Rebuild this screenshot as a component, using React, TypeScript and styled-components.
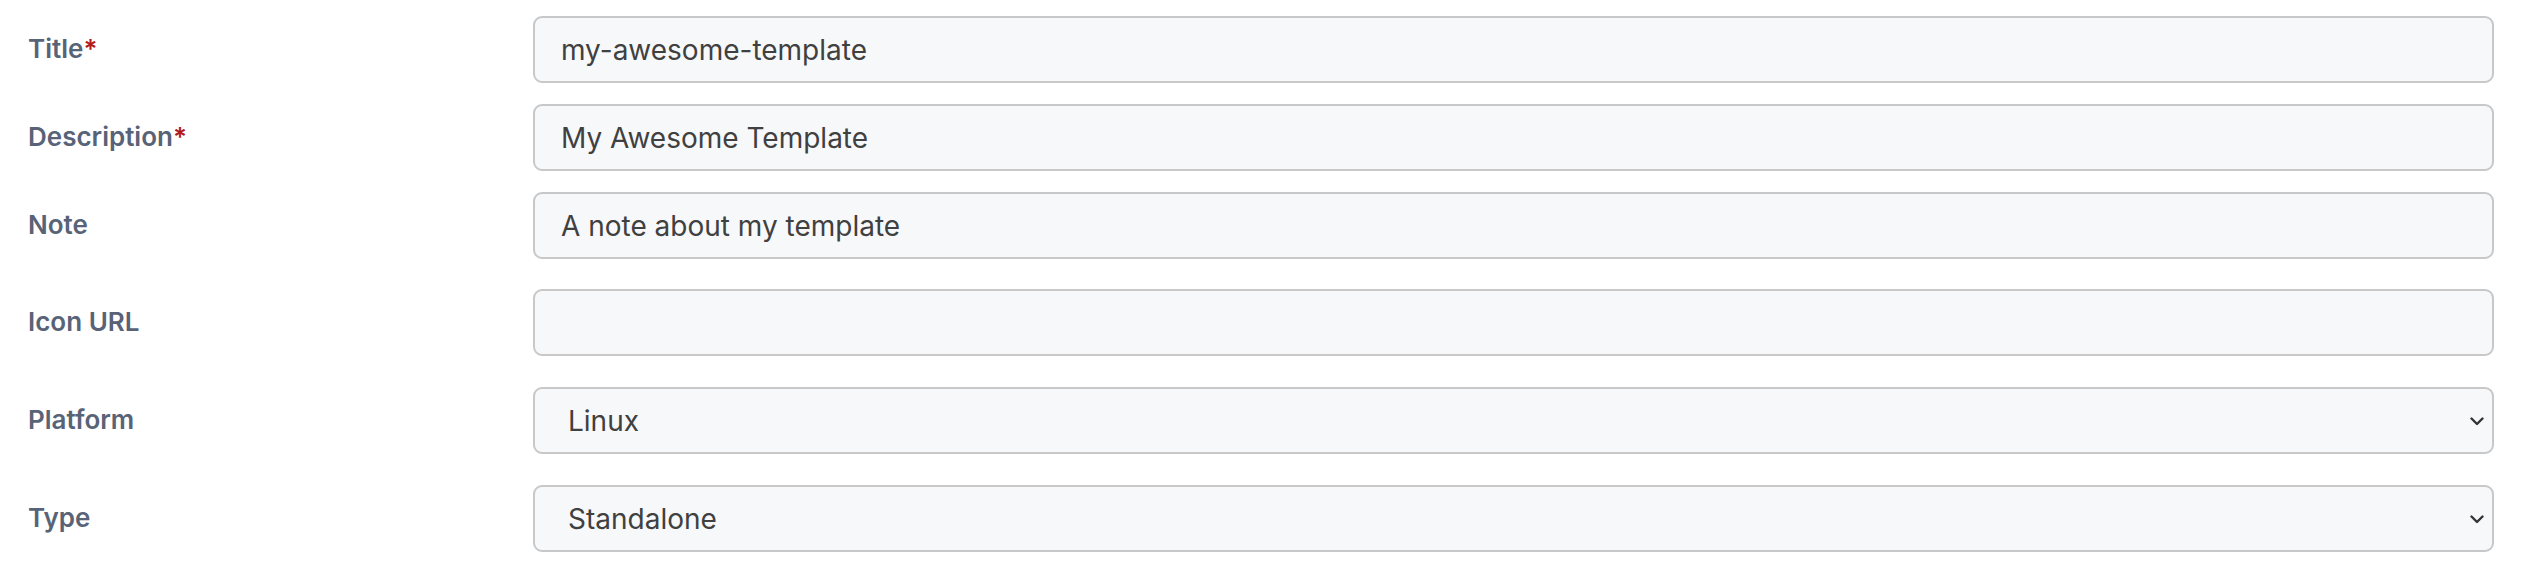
import React from "react";
import styled, { createGlobalStyle } from "styled-components";

const GlobalStyle = createGlobalStyle`
  html, body {
    margin: 0;
    padding: 0;
    background: #fff;
  }
  body {
    font-family: Inter, "Noto Sans", sans-serif;
  }
`;

const Form = styled.form`
  width: 2544px;
  box-sizing: border-box;
  padding: 16px 50px 0 28px;
`;

const Row = styled.div<{ $gap: number }>`
  display: grid;
  grid-template-columns: 505px 1fr;
  align-items: center;
  margin-bottom: ${(p) => p.$gap}px;
`;

const Label = styled.label`
  font-size: 26px;
  font-weight: 600;
  color: #586377;
  line-height: 1;
  padding-bottom: 2px;
`;

const Required = styled.span`
  color: #b31b1b;
`;

const TextInput = styled.input`
  box-sizing: border-box;
  width: 100%;
  height: 67px;
  padding: 0 26px;
  border: 2px solid #c8c8c8;
  border-radius: 9px;
  background: #f7f8fa;
  font-family: Inter, "Noto Sans", sans-serif;
  font-size: 28px;
  color: #404040;
  outline: none;
`;

const SelectWrap = styled.div`
  position: relative;
`;

const Select = styled.select`
  box-sizing: border-box;
  width: 100%;
  height: 67px;
  padding: 0 60px 0 33px;
  border: 2px solid #c8c8c8;
  border-radius: 9px;
  background: #f7f8fa;
  font-family: Inter, "Noto Sans", sans-serif;
  font-size: 28px;
  color: #404040;
  appearance: none;
  -webkit-appearance: none;
  outline: none;
`;

const Chevron = styled.svg`
  position: absolute;
  right: 10px;
  top: 50%;
  width: 14px;
  height: 10px;
  margin-top: -5px;
  pointer-events: none;
`;

const ChevronDown = () => (
  <Chevron viewBox="0 0 14 10">
    <path
      d="M1.5 2.5 L7 8 L12.5 2.5"
      fill="none"
      stroke="#333"
      strokeWidth="2.4"
      strokeLinecap="round"
      strokeLinejoin="round"
    />
  </Chevron>
);

const App = () => {
  return (
    <>
      <GlobalStyle />
      <Form>
        <Row $gap={21}>
          <Label htmlFor="title">
            Title<Required>*</Required>
          </Label>
          <TextInput id="title" defaultValue="my-awesome-template" />
        </Row>
        <Row $gap={21}>
          <Label htmlFor="description">
            Description<Required>*</Required>
          </Label>
          <TextInput id="description" defaultValue="My Awesome Template" />
        </Row>
        <Row $gap={30}>
          <Label htmlFor="note">Note</Label>
          <TextInput id="note" defaultValue="A note about my template" />
        </Row>
        <Row $gap={31}>
          <Label htmlFor="icon">Icon URL</Label>
          <TextInput id="icon" defaultValue="" />
        </Row>
        <Row $gap={31}>
          <Label htmlFor="platform">Platform</Label>
          <SelectWrap>
            <Select id="platform" defaultValue="linux">
              <option value="linux">Linux</option>
              <option value="windows">Windows</option>
            </Select>
            <ChevronDown />
          </SelectWrap>
        </Row>
        <Row $gap={0}>
          <Label htmlFor="type">Type</Label>
          <SelectWrap>
            <Select id="type" defaultValue="standalone">
              <option value="standalone">Standalone</option>
              <option value="swarm">Swarm</option>
            </Select>
            <ChevronDown />
          </SelectWrap>
        </Row>
      </Form>
    </>
  );
};

export default App;
